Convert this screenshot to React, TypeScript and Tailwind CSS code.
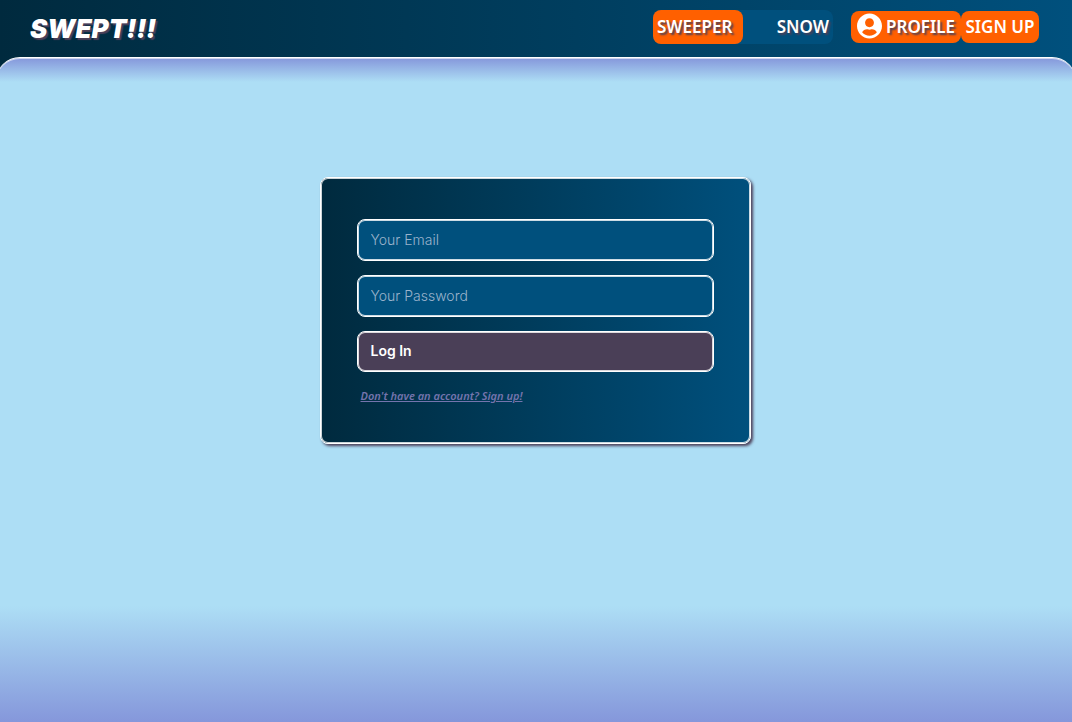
import React from 'react';

const outline = 'border border-white inset-ring inset-ring-white/80';

const fieldClass = `h-[42px] w-full rounded-lg ${outline} bg-[#00507d] px-[13px] pb-[2px] font-['Inter',sans-serif] text-sm font-light text-white placeholder:text-[#9ab3cc] outline-none`;

const navText =
  "font-['Noto_Sans',sans-serif] text-[17px] leading-6 font-semibold text-white";

const textShadow = '[text-shadow:2px_2px_2px_#4b3f58]';

function ProfileIcon() {
  return (
    <svg viewBox="0 0 496 512" className="-mt-[2px] h-[26px] w-[25px] shrink-0 fill-white" aria-hidden="true">
      <path d="M248 8C111 8 0 119 0 256s111 248 248 248 248-111 248-248S385 8 248 8zm0 96c48.600 0 88 39.400 88 88s-39.400 88-88 88-88-39.400-88-88 39.400-88 88-88zm0 344c-58.700 0-111.300-26.600-146.500-68.200 18.800-35.400 55.600-59.800 98.500-59.800 2.400 0 4.800.4 7.100 1.100 13 4.200 26.600 6.900 40.900 6.900s28-2.700 40.900-6.900c2.300-.7 4.700-1.100 7.100-1.100 42.900 0 79.700 24.400 98.500 59.800C359.300 421.400 306.700 448 248 448z" />
    </svg>
  );
}

function Header() {
  return (
    <header className="flex h-[57px] items-start justify-between pr-[33px] pl-[30px]">
      <a
        href="#home"
        className="mt-[13px] font-['Inter',sans-serif] text-[26px] leading-8 font-black text-white italic [text-shadow:2px_2px_1px_#4b3f58]"
      >
        SWEPT!!!
      </a>
      <nav className="flex items-center pt-[10px]">
        <div className="mr-[18px] flex h-[34px] w-[180px] rounded-lg bg-[#00507d]">
          <button type="button" className={`w-[90px] rounded-lg bg-[#ff6000] pl-1 text-left ${navText} ${textShadow}`}>
            SWEEPER
          </button>
          <button type="button" className={`flex-1 pr-1 text-right ${navText} ${textShadow}`}>
            SNOW
          </button>
        </div>
        <button
          type="button"
          className={`flex h-8 w-[110px] items-center gap-1 rounded-lg bg-[#ff6000] pl-[6px] ${navText} ${textShadow}`}
        >
          <ProfileIcon />
          PROFILE
        </button>
        <button type="button" className={`h-8 w-[78px] rounded-lg bg-[#ff6000] whitespace-nowrap ${navText}`}>
          SIGN UP
        </button>
      </nav>
    </header>
  );
}

function LoginForm() {
  return (
    <form
      onSubmit={(event) => event.preventDefault()}
      className={`flex w-[431px] max-w-full flex-col gap-[14px] rounded-lg ${outline} bg-linear-to-r from-[#002a3e] to-[#00507d] px-9 pt-[41px] pb-[37px] shadow-[2px_2px_3px_#4b3f58]`}
    >
      <input type="email" aria-label="Your Email" placeholder="Your Email" className={fieldClass} />
      <input type="password" aria-label="Your Password" placeholder="Your Password" className={fieldClass} />
      <button
        type="submit"
        className={`h-[41px] w-full rounded-lg ${outline} bg-[#4a3f57] px-[13px] pb-[2px] text-left font-['Inter',sans-serif] text-sm font-semibold text-white`}
      >
        Log In
      </button>
      <a
        href="#signup"
        className="self-start pl-1 font-['Noto_Sans',sans-serif] text-[11px] leading-5 font-semibold text-[#7474ad] italic underline"
      >
        Don't have an account? Sign up!
      </a>
    </form>
  );
}

export default function App() {
  return (
    <div className="flex min-h-screen flex-col overflow-hidden bg-linear-to-r from-[#002a3e] to-[#00507d]">
      <Header />
      <main className="-mx-1 flex flex-1 flex-col items-center rounded-t-3xl border-t border-white bg-[linear-gradient(to_bottom,#8597db_0px,#addef5_24px,#addef5_82.5%,#8597db_100%)] pt-[119px] pr-[18px] pb-16 pl-4 inset-shadow-[0_1px_0_#ffffff99]">
        <LoginForm />
      </main>
    </div>
  );
}
